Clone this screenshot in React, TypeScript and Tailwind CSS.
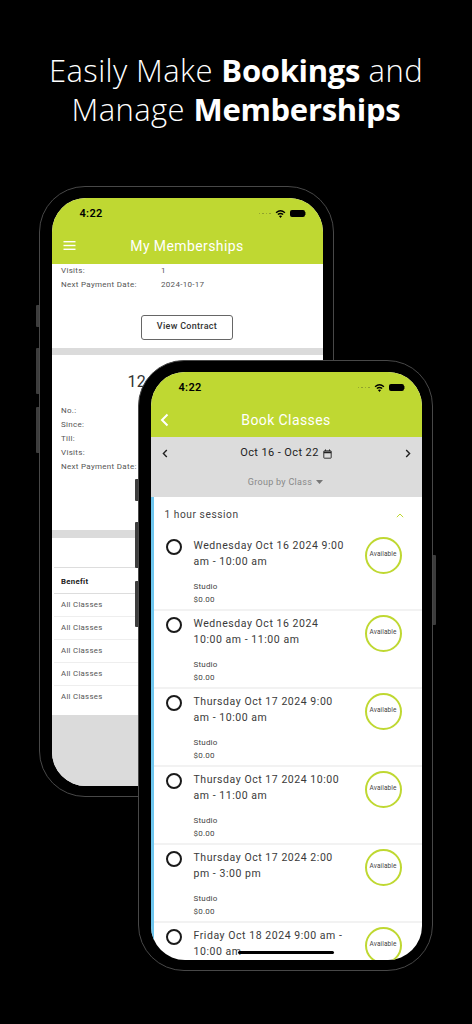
const slots = [
  { lines: "Wednesday Oct 16 2024 9:00 am - 10:00 am", meta: true },
  { lines: "Wednesday Oct 16 2024 10:00 am - 11:00 am", meta: true },
  { lines: "Thursday Oct 17 2024 9:00 am - 10:00 am", meta: true },
  { lines: "Thursday Oct 17 2024 10:00 am - 11:00 am", meta: true },
  { lines: "Thursday Oct 17 2024 2:00 pm - 3:00 pm", meta: true },
  // last row runs off the bottom of the screen
  { lines: "Friday Oct 18 2024 9:00 am - 10:00 am", meta: false },
];

const infoRows = ["No.:", "Since:", "Till:", "Visits:", "Next Payment Date:"];

function StatusBar() {
  return (
    <div className="flex h-[32px] items-center justify-between pl-[28px] pr-[17px] text-black">
      <span className="text-[11px] leading-[15px] font-semibold tracking-[0.3px]">4:22</span>
      <div className="flex items-center gap-[4px]">
        <div className="flex gap-[2px]">
          <span className="h-[1.5px] w-[1.5px] rounded-full bg-[#8a9a2c]" />
          <span className="h-[1.5px] w-[1.5px] rounded-full bg-[#8a9a2c]" />
          <span className="h-[1.5px] w-[1.5px] rounded-full bg-[#8a9a2c]" />
          <span className="h-[1.5px] w-[1.5px] rounded-full bg-[#8a9a2c]" />
        </div>
        <svg width="11" height="8" viewBox="0 0 12 9" fill="none" stroke="black">
          <path d="M1 3.2C4 .4 8 .4 11 3.2" strokeWidth="1.5" />
          <path d="M3 5.2C4.8 3.6 7.2 3.6 9 5.2" strokeWidth="1.5" />
          <path d="M6 8.6 4.6 7.1C5.4 6.4 6.6 6.4 7.4 7.1Z" fill="black" strokeWidth="0.5" />
        </svg>
        <div className="flex items-center">
          <div className="h-[6.5px] w-[15px] rounded-[2px] bg-black" />
          <div className="h-[3px] w-[1px] bg-[#6b7a20]" />
        </div>
      </div>
    </div>
  );
}

function Phone({ className, children }: { className: string; children: React.ReactNode }) {
  return (
    <div className={`absolute h-[611px] w-[295px] ${className}`}>
      <div className="absolute left-[-3px] top-[119px] h-[22px] w-[3px] rounded-l-[1px] bg-[#3d3d3d]" />
      <div className="absolute left-[-3px] top-[162px] h-[46px] w-[3px] rounded-l-[1px] bg-[#3d3d3d]" />
      <div className="absolute left-[-3px] top-[221px] h-[46px] w-[3px] rounded-l-[1px] bg-[#3d3d3d]" />
      <div className="absolute right-[-3px] top-[195px] h-[70px] w-[3px] rounded-r-[1px] bg-[#3d3d3d]" />
      <div className="h-full w-full rounded-[46px] border-[1.5px] border-[#484848] bg-black pb-[10.5px] pl-[11.5px] pr-[10.5px] pt-[10.5px]">
        <div className="relative flex h-full w-full flex-col overflow-hidden rounded-[34px] bg-white">
          {children}
        </div>
      </div>
    </div>
  );
}

function Memberships() {
  return (
    <>
      <header className="h-[66px] shrink-0 bg-[#bfd832]">
        <StatusBar />
        <div className="relative mt-[5px] text-center text-[14px] leading-[22px] tracking-[0.4px] text-white">
          <svg className="absolute left-[11px] top-[5px]" width="13" height="11" viewBox="0 0 13 11" fill="white">
            <rect x="0.5" y="1" width="12" height="1.4" />
            <rect x="0.5" y="4.8" width="12" height="1.4" />
            <rect x="0.5" y="8.6" width="12" height="1.4" />
          </svg>
          My Memberships
        </div>
      </header>

      <div className="h-[84px] shrink-0 text-[8px] tracking-[0.3px] text-[#555]">
        <div className="flex h-[14px] items-center pl-[9.5px]">
          <span className="w-[100px]">Visits:</span>
          <span>1</span>
        </div>
        <div className="flex h-[14px] items-center pl-[9.5px]">
          <span className="w-[100px]">Next Payment Date:</span>
          <span>2024-10-17</span>
        </div>
        <div className="mt-[23px] flex justify-center">
          <div className="flex h-[25px] w-[92px] items-center justify-center rounded-[3px] border border-[#666] text-[9px] font-medium text-[#333]">
            View Contract
          </div>
        </div>
      </div>

      <div className="h-[7px] shrink-0 bg-[#dbdbdb]" />

      <div className="h-[175px] shrink-0 text-[8px] tracking-[0.3px] text-[#555]">
        <div className="pl-[76px] pt-[17px] text-[16px] leading-[20px] text-[#333]">12</div>
        <div className="mt-[12px] flex flex-col pl-[9.5px]">
          {infoRows.map((row) => (
            <div key={row} className="flex h-[14px] items-center">
              {row}
            </div>
          ))}
        </div>
      </div>

      <div className="h-[8px] shrink-0 bg-[#dbdbdb]" />

      <div className="flex h-[177px] shrink-0 flex-col pl-[2px] pt-[29px] text-[7.8px] tracking-[0.3px] text-[#555]">
        <div className="flex h-[27px] items-center border-y border-[#ddd] pl-[7.5px] pt-[4px] font-bold text-[#222]">Benefit</div>
        <div className="flex h-[23px] items-center border-b border-[#eee] pl-[7.5px]">All Classes</div>
        <div className="flex h-[23px] items-center border-b border-[#eee] pl-[7.5px]">All Classes</div>
        <div className="flex h-[23px] items-center border-b border-[#eee] pl-[7.5px]">All Classes</div>
        <div className="flex h-[23px] items-center border-b border-[#eee] pl-[7.5px]">All Classes</div>
        <div className="flex h-[23px] items-center pl-[7.5px]">All Classes</div>
      </div>

      <div className="flex-1 bg-[#dbdbdb]" />
    </>
  );
}

function SlotRow({ lines, meta }: { lines: string; meta: boolean }) {
  return (
    <div className="flex h-[78px] shrink-0 border-b-2 border-[#f2f2f2] pl-[12px] pr-[20px] text-[#444]">
      <div className="mt-[6px] h-[16px] w-[16px] shrink-0 rounded-full border-2 border-[#1a1a1a]" />
      <div className="ml-[12px] w-[153px] shrink-0">
        <div className="mt-[5px] h-[42px] text-[10.5px] leading-[16px] tracking-[0.55px] text-[#3a3a3a]">{lines}</div>
        {meta && (
          <>
            <div className="text-[8px] leading-[13px] tracking-[0.2px]">Studio</div>
            <div className="text-[8px] leading-[13px] tracking-[0.2px]">$0.00</div>
          </>
        )}
      </div>
      <div className="ml-auto mt-[4px] flex h-[37px] w-[37px] shrink-0 items-center justify-center rounded-full border-2 border-[#bfd832] text-[6.5px] tracking-[0.1px] text-[#444]">
        Available
      </div>
    </div>
  );
}

function BookClasses() {
  return (
    <>
      <header className="h-[65px] shrink-0 bg-[#bfd832]">
        <StatusBar />
        <div className="relative mt-[6px] text-center text-[14px] leading-[21px] tracking-[0.4px] text-white">
          <svg className="absolute left-[9px] top-[3px]" width="9" height="14" viewBox="0 0 9 14" fill="none" stroke="white" strokeWidth="2">
            <path d="M7.5 1.5 2 7l5.5 5.5" />
          </svg>
          Book Classes
        </div>
      </header>

      <div className="h-[60px] shrink-0 bg-[#dcdcdc]">
        <div className="flex h-[34px] items-center justify-between pl-[11px] pr-[11px] text-[#222]">
          <svg width="6" height="9" viewBox="0 0 6 9" fill="none" stroke="#222" strokeWidth="1.4">
            <path d="M4.8 1 1.4 4.5l3.4 3.5" />
          </svg>
          <div className="flex items-center gap-[4px] text-[11px] tracking-[0.4px]">
            Oct 16 - Oct 22
            <svg width="9" height="10" viewBox="0 0 9 10" fill="none" stroke="#222">
              <rect x="0.8" y="1.8" width="7.4" height="7.4" rx="0.6" strokeWidth="0.9" />
              <path d="M.8 3.4h7.4" strokeWidth="1.6" />
              <path d="M2.5.4v1.6M6.5.4v1.6" strokeWidth="0.9" />
            </svg>
          </div>
          <svg width="6" height="9" viewBox="0 0 6 9" fill="none" stroke="#222" strokeWidth="1.4">
            <path d="M1.2 1 4.6 4.5 1.2 8" />
          </svg>
        </div>
        <div className="mt-[5px] flex items-center justify-center gap-[4px] pr-[1px] text-[9px] tracking-[0.3px] text-[#888]">
          Group by Class
          <svg width="7" height="4" viewBox="0 0 7 4" fill="#777">
            <path d="M0 0h7L3.5 4z" />
          </svg>
        </div>
      </div>

      <div className="min-h-0 flex-1 overflow-hidden border-l-[3px] border-[#6ec6ee]">
        <div className="flex h-[36px] items-center justify-between pl-[11px] pr-[18px] pt-[1px] text-[10.2px] tracking-[0.55px] text-[#444]">
          1 hour session
          <svg width="8" height="5" viewBox="0 0 8 5" fill="none" stroke="#bfd832" strokeWidth="1">
            <path d="M.8 4.2 4 1l3.2 3.2" />
          </svg>
        </div>
        {slots.map((slot) => (
          <SlotRow key={slot.lines} lines={slot.lines} meta={slot.meta} />
        ))}
      </div>

      <div className="absolute bottom-[6px] left-[87px] h-[3px] w-[96px] rounded-full bg-black" />
    </>
  );
}

export default function App() {
  return (
    <div className="relative h-[1024px] w-[472px] overflow-hidden bg-black font-['Roboto',sans-serif]">
      <h1 className="pt-[51px] text-center font-['Open_Sans',sans-serif] text-[31px] leading-[39px] font-light tracking-[0.4px] text-white">
        Easily Make <span className="font-bold tracking-[-0.3px]">Bookings</span> and
        <br />
        Manage <span className="font-bold tracking-[-0.3px]">Memberships</span>
      </h1>
      <Phone className="left-[39px] top-[186px]">
        <Memberships />
      </Phone>
      <Phone className="left-[138px] top-[360px]">
        <BookClasses />
      </Phone>
    </div>
  );
}
